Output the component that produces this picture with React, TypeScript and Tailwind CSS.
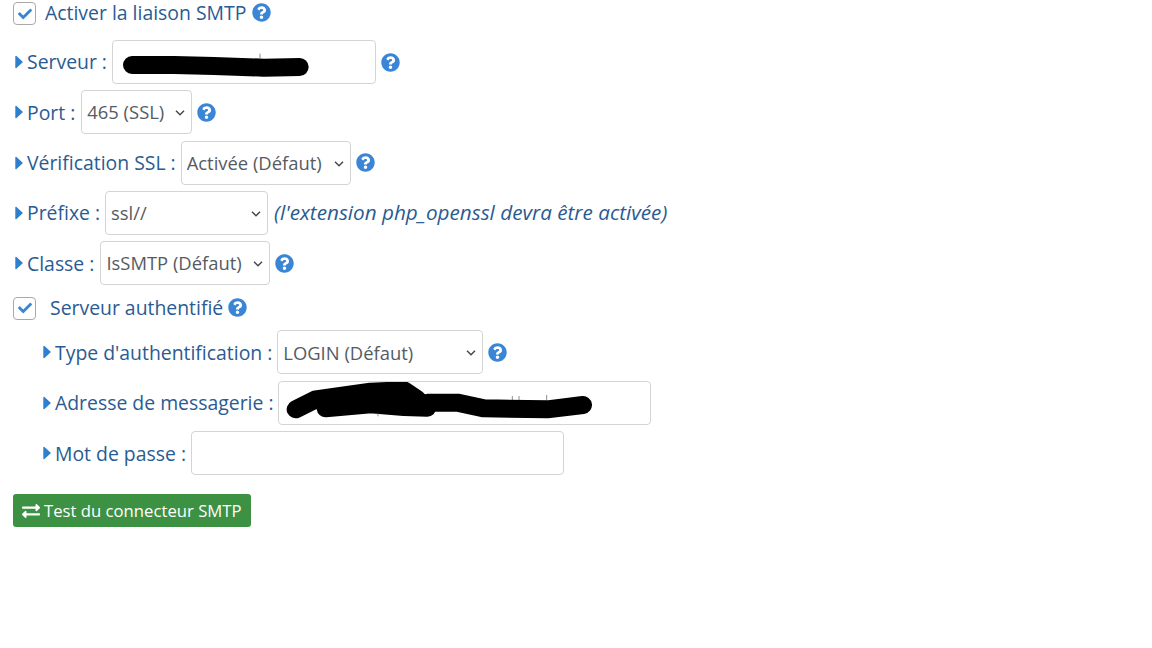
import { FaCheck, FaExchangeAlt, FaQuestionCircle } from 'react-icons/fa';
import type { ReactNode } from 'react';

function Help({ className = '' }: { className?: string }) {
  return <FaQuestionCircle size={19} className={`shrink-0 text-[#3a85d6] ${className}`} />;
}

function Label({ children }: { children: ReactNode }) {
  return (
    <span className="flex items-center whitespace-nowrap">
      <svg viewBox="0 0 8 14" className="mr-[4px] ml-[2px] h-[14px] w-[8px] shrink-0 text-[#2f7fd0]">
        <path d="M1 1.5 7 7l-6 5.5z" fill="currentColor" stroke="currentColor" strokeWidth="1.4" strokeLinejoin="round" />
      </svg>
      {children}
    </span>
  );
}

function Select({ value, width }: { value: string; width: string }) {
  return (
    <div className={`relative h-[44px] ${width}`}>
      <select
        defaultValue={value}
        className="h-full w-full appearance-none rounded border border-[#d4d4d4] bg-white pl-[5px] text-[18.4px] text-[#555b63] outline-none"
      >
        <option>{value}</option>
      </select>
      <svg viewBox="0 0 10 6" className="absolute top-[20px] right-[7px] h-[6px] w-[10px] text-[#44494f]">
        <path d="M1 .8 5 4.8 9 .8" fill="none" stroke="currentColor" strokeWidth="1.5" />
      </svg>
    </div>
  );
}

function Input({ width, children }: { width: string; children?: ReactNode }) {
  return <div className={`relative h-[44px] rounded border border-[#d4d4d4] bg-white ${width}`}>{children}</div>;
}

function Check() {
  return (
    <span className="mt-[2px] flex h-[23px] w-[23px] shrink-0 items-center justify-center rounded border border-[#a9a9a9] bg-white">
      <FaCheck size={14} className="text-[#3a85d6]" />
    </span>
  );
}

function Row({ children }: { children: ReactNode }) {
  return <div className="flex h-[44px] items-center">{children}</div>;
}

export default function App() {
  return (
    <div
      className="h-[648px] overflow-hidden bg-white pl-[13px] text-[19.4px] text-[#2a5b92]"
      style={{ fontFamily: '"Open Sans", "Noto Sans", sans-serif' }}
    >
      <div className="flex h-[25px] items-center">
        <Check />
        <span className="ml-[9px]">Activer la liaison SMTP</span>
        <Help className="ml-[6px]" />
      </div>

      <div className="mt-[15px] flex flex-col gap-[6.3px]">
        <Row>
          <Label>Serveur :</Label>
          <div className="ml-[5px]" />
          <Input width="w-[264px]">
            {/* redacted value */}
            <svg viewBox="337 120 792 132" className="absolute top-0 left-0 h-[44px] w-[264px]">
              <path
                d="M394 192 L520 192 L640 195 L790 200 L897 198"
                fill="none"
                stroke="#000"
                strokeWidth="54"
                strokeLinecap="round"
                strokeLinejoin="round"
              />
              <path d="M778 158 V172" stroke="#555" strokeWidth="2" />
            </svg>
          </Input>
          <Help className="ml-[5px]" />
        </Row>
        <Row>
          <Label>Port :</Label>
          <div className="ml-[6px]" />
          <Select value="465 (SSL)" width="w-[111px]" />
          <Help className="ml-[5px]" />
        </Row>
        <Row>
          <Label>Vérification SSL :</Label>
          <div className="ml-[5px]" />
          <Select value="Activée (Défaut)" width="w-[170px]" />
          <Help className="ml-[5px]" />
        </Row>
        <Row>
          <Label>Préfixe :</Label>
          <div className="ml-[5px]" />
          <Select value="ssl//" width="w-[163px]" />
          <span className="ml-[6px] text-[20.7px] italic">(l'extension php_openssl devra être activée)</span>
        </Row>
        <Row>
          <Label>Classe :</Label>
          <div className="ml-[6px]" />
          <Select value="IsSMTP (Défaut)" width="w-[170px]" />
          <Help className="ml-[5px]" />
        </Row>
      </div>

      <div className="mt-[9.6px] flex h-[25px] items-center">
        <Check />
        <span className="ml-[14px]">Serveur authentifié</span>
        <Help className="ml-[5px]" />
      </div>

      <div className="mt-[10.6px] flex flex-col gap-[6.4px] pl-[28px]">
        <Row>
          <Label>Type d'authentification :</Label>
          <div className="ml-[5px]" />
          <Select value="LOGIN (Défaut)" width="w-[206px]" />
          <Help className="ml-[5px]" />
        </Row>
        <Row>
          <Label>Adresse de messagerie :</Label>
          <div className="ml-[4px]" />
          <Input width="w-[373px]">
            {/* redacted value */}
            <svg viewBox="25 153 1119 132" className="absolute top-0 left-0 h-[44px] w-[373px]">
              <path
                d="M75 235 L135 205 L230 192 L300 182 L400 178 L440 205 M165 232 L300 220 L400 228 L470 230 M470 215 L560 215 L640 232 L830 235 L937 222"
                fill="none"
                stroke="#000"
                strokeWidth="54"
                strokeLinecap="round"
                strokeLinejoin="round"
              />
              <path d="M322 245 V256 M725 195 V207 M745 195 V207 M828 192 V207" stroke="#555" strokeWidth="2" />
            </svg>
          </Input>
        </Row>
        <Row>
          <Label>Mot de passe :</Label>
          <div className="ml-[5px]" />
          <Input width="w-[373px]" />
        </Row>
      </div>

      <button className="mt-[19px] flex h-[33px] w-[238px] items-center rounded-[3px] bg-[#3d9142] pl-[9px] text-[16.7px] whitespace-nowrap text-white">
        <FaExchangeAlt size={18} className="mr-[4px] shrink-0" />
        Test du connecteur SMTP
      </button>
    </div>
  );
}
